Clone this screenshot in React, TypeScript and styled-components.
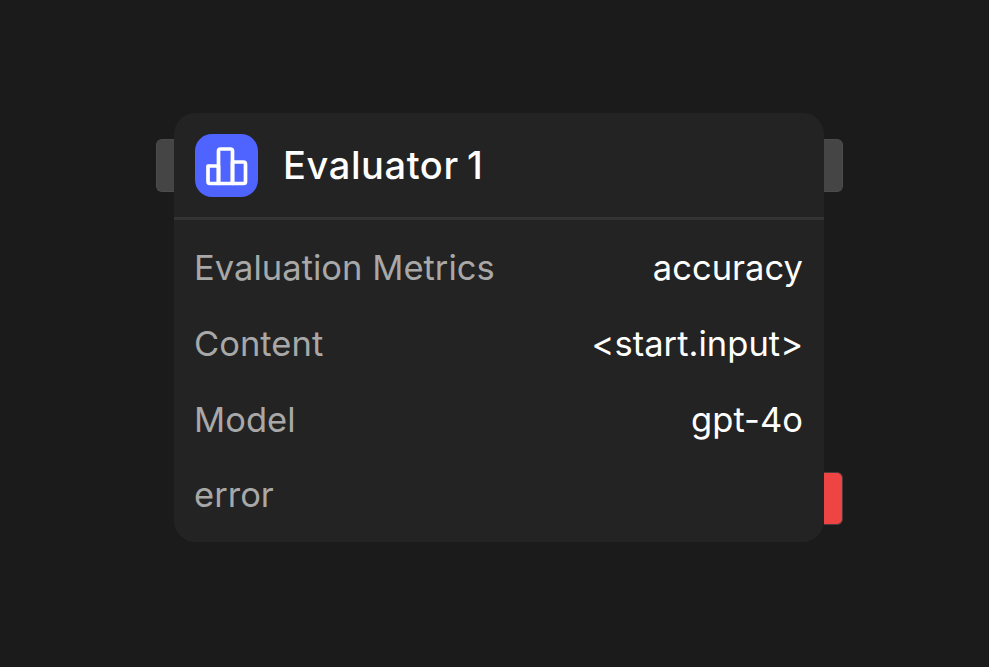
import React from 'react';
import styled, { createGlobalStyle } from 'styled-components';

const Global = createGlobalStyle`
  html, body { margin: 0; padding: 0; background: #1b1b1b; }
  body { font-family: Inter, "Liberation Sans", sans-serif; }
`;

const Page = styled.div`
  width: 989px;
  height: 667px;
  box-sizing: border-box;
  padding: 113px 165px 125px 174px;
  background: #1b1b1b;
`;

const Card = styled.div`
  position: relative;
  width: 650px;
  height: 429px;
  display: flex;
  flex-direction: column;
  background: #232323;
  border-radius: 21px;
`;

const Handle = styled.div<{ $side: 'left' | 'right'; $top: number; $error?: boolean }>`
  position: absolute;
  top: ${p => p.$top}px;
  ${p => (p.$side === 'left' ? 'left: -18px;' : 'right: -19px;')}
  width: ${p => (p.$side === 'left' ? 18 : 19)}px;
  height: 53px;
  box-sizing: border-box;
  background: ${p => (p.$error ? '#ef4444' : '#454545')};
  border: 1px solid ${p => (p.$error ? '#4a3a3a' : '#4c4c4c')};
  border-${p => (p.$side === 'left' ? 'right' : 'left')}: none;
  border-radius: ${p => (p.$side === 'left' ? '6px 0 0 6px' : '0 6px 6px 0')};
`;

const Header = styled.div`
  height: 104px;
  flex: none;
  display: flex;
  align-items: center;
  gap: 25px;
  padding: 0 21px;
  border-bottom: 3px solid #333333;
`;

const IconTile = styled.div`
  width: 63px;
  height: 63px;
  border-radius: 17px;
  background: #4f64ff;
  display: flex;
  align-items: center;
  justify-content: center;
`;

const Title = styled.div`
  color: #ffffff;
  font-size: 38px;
  font-weight: 500;
  letter-spacing: 0.6px;
  word-spacing: -2.500px;
`;

const Rows = styled.div`
  display: flex;
  flex-direction: column;
  padding: 10px 21px 0 20px;
`;

const Row = styled.div`
  height: 75.7px;
  display: flex;
  align-items: center;
  justify-content: space-between;
  font-size: 34.5px;
  letter-spacing: 0.03px;
`;

const Label = styled.span`
  color: #a8a8a8;
`;

const Value = styled.span`
  color: #ffffff;
`;

const rows: [string, string][] = [
  ['Evaluation Metrics', 'accuracy'],
  ['Content', '<start.input>'],
  ['Model', 'gpt-4o'],
  ['error', ''],
];

export default function App() {
  return (
    <Page>
      <Global />
      <Card>
        <Handle $side="left" $top={26} />
        <Handle $side="right" $top={26} />
        <Handle $side="right" $top={359} $error />
        <Header>
          <IconTile>
            <svg width="63" height="63" viewBox="0 0 63 63" fill="none" stroke="#fff" strokeWidth="3.7" strokeLinejoin="round">
              <path d="M13 32h10.500v17.500H15a2 2 0 0 1-2-2z" />
              <path d="M23.500 49.500V17a2 2 0 0 1 2-2h10a2 2 0 0 1 2 2v32.500z" />
              <path d="M37.500 28h11a2 2 0 0 1 2 2v17.500a2 2 0 0 1-2 2H37.500z" />
            </svg>
          </IconTile>
          <Title>Evaluator 1</Title>
        </Header>
        <Rows>
          {rows.map(([l, v]) => (
            <Row key={l}>
              <Label>{l}</Label>
              <Value>{v}</Value>
            </Row>
          ))}
        </Rows>
      </Card>
    </Page>
  );
}
